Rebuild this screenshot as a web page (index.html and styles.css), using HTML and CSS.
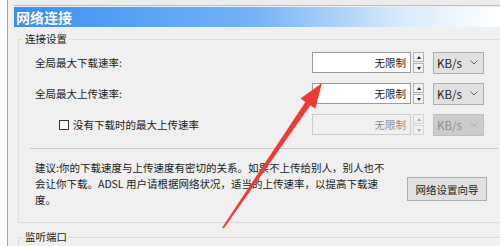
FILE: index.html
```html
<!DOCTYPE html>
<html>
<head>
    <meta charset="UTF-8">
    <meta name="viewport" content="width=device-width, initial-scale=1.0">
    <title>网络连接</title>
    <link rel="stylesheet" href="styles.css">
</head>
<body>
    <div class="shell">
        <div class="side"></div>
        <div class="main">
            <div class="topline"></div>
            <div class="titlebar">网络连接</div>
            <div class="panel">
                <fieldset class="group">
                    <legend>连接设置</legend>

                    <div class="row">
                        <span class="row-label">全局最大下载速率:</span>
                        <div class="field">无限制</div>
                        <div class="spin"><span class="up"></span><span class="down"></span></div>
                        <div class="unit">KB/s
                            <svg width="8" height="5" viewBox="0 0 8 5"><polyline points="0.5,0.5 4,4 7.5,0.5" fill="none" stroke="#666" stroke-width="1"/></svg>
                        </div>
                    </div>

                    <div class="row">
                        <span class="row-label">全局最大上传速率:</span>
                        <div class="field">无限制</div>
                        <div class="spin"><span class="up"></span><span class="down"></span></div>
                        <div class="unit">KB/s
                            <svg width="8" height="5" viewBox="0 0 8 5"><polyline points="0.5,0.5 4,4 7.5,0.5" fill="none" stroke="#666" stroke-width="1"/></svg>
                        </div>
                    </div>

                    <div class="row disabled">
                        <span class="row-label check"><span class="box"></span>没有下载时的最大上传速率</span>
                        <div class="field">无限制</div>
                        <div class="spin"><span class="up"></span><span class="down"></span></div>
                        <div class="unit">KB/s
                            <svg width="8" height="5" viewBox="0 0 8 5"><polyline points="0.5,0.5 4,4 7.5,0.5" fill="none" stroke="#aaa" stroke-width="1"/></svg>
                        </div>
                    </div>

                    <div class="sep"></div>

                    <div class="advice">
                        <div class="advice-text">
                            <span>建议:你的下载速度与上传速度有密切的关系。如果不上传给别人，别人也不</span>
                            <span>会让你下载。ADSL 用户请根据网络状况，适当的上传速率，以提高下载速</span>
                            <span>度。</span>
                        </div>
                        <button type="button">网络设置向导</button>
                    </div>
                </fieldset>

                <fieldset class="group">
                    <legend>监听端口</legend>
                </fieldset>
            </div>
        </div>
    </div>

    <svg class="arrow" width="500" height="246" viewBox="0 0 500 246">
        <polygon points="322,83 315.3,108.7 310.4,105.3 223.8,228.6 222.2,227.4 305.4,101.9 300.5,98.6" fill="#ee3b36"/>
    </svg>
</body>
</html>
```

FILE: styles.css
```css
body {
    margin: 0;
    width: 500px;
    height: 246px;
    overflow: hidden;
    position: relative;
    background-color: #f0f0f0;
    font-family: "Noto Sans CJK SC", "Noto Sans", sans-serif;
    font-size: 10.5px;
    color: #1a1a1a;
}
.shell {
    display: flex;
    height: 246px;
    overflow: hidden;
}
.side {
    flex-shrink: 0;
    width: 7px;
    background: #fff;
    border-right: 1px solid #a5a5a5;
}
.main {
    flex: 1;
    margin-left: 6px;
    overflow: hidden;
}
.topline {
    height: 5px;
    background: #ececec;
    border-bottom: 1px solid #bcbcbc;
    margin-bottom: 1px;
}
.titlebar {
    height: 20px;
    line-height: 20px;
    padding-left: 2px;
    color: #fff;
    font-size: 14px;
    font-weight: bold;
    text-shadow: 0 0 1px rgba(0,0,0,0.25);
    background: linear-gradient(to right, #3b8ef1 0%, #74b4f6 50%, #d8ebfd 80%, #fff 100%);
}
.panel {
    padding-left: 4px;
    box-shadow: -1px 0 #d8d8d8;
}
.group {
    margin: 5px 0 0 0;
    border: 1px solid #dcdcdc;
    border-right: none;
    padding: 6px 16px 14px 16px;
    min-width: 0;
}
.group + .group {
    margin-top: 7px;
    height: 20px;
}
.group legend {
    margin-left: -12px;
    padding: 0 2px;
    line-height: 14px;
}
.row {
    display: flex;
    align-items: center;
    height: 21px;
}
.row + .row {
    margin-top: 10px;
}
.row-label {
    flex: 1;
}
.check {
    display: flex;
    align-items: center;
    padding-left: 24px;
}
.box {
    width: 10px;
    height: 10px;
    box-sizing: border-box;
    border: 1px solid #333;
    background: #fff;
    margin-right: 4px;
}
.field {
    width: 99px;
    height: 21px;
    box-sizing: border-box;
    border: 1px solid #9a9a9a;
    background: #fff;
    text-align: right;
    padding-right: 4px;
    line-height: 19px;
}
.spin {
    width: 11px;
    height: 21px;
    margin-left: 2px;
    display: flex;
    flex-direction: column;
    gap: 1px;
}
.spin span {
    flex: 1;
    border: 1px solid #b4b4b4;
    background: #f4f4f4;
    display: flex;
    align-items: center;
    justify-content: center;
}
.spin .up::after {
    content: "";
    border-style: solid;
    border-width: 0 2.5px 3px 2.5px;
    border-color: transparent transparent #222 transparent;
}
.spin .down::after {
    content: "";
    border-style: solid;
    border-width: 3px 2.5px 0 2.5px;
    border-color: #222 transparent transparent transparent;
}
.unit {
    width: 51px;
    height: 22px;
    margin-left: 9px;
    box-sizing: border-box;
    border: 1px solid #adadad;
    background: #e1e1e1;
    display: flex;
    align-items: center;
    justify-content: space-between;
    padding: 0 5px 0 3px;
    font-size: 11.5px;
}
.disabled .field {
    background: #f0f0f0;
    border-color: #cccccc;
    color: #8d8d8d;
}
.disabled .spin span {
    border-color: #d4d4d4;
    background: #f0f0f0;
}
.disabled .spin .up::after {
    border-bottom-color: #a8a8a8;
}
.disabled .spin .down::after {
    border-top-color: #a8a8a8;
}
.disabled .unit {
    background: #cccccc;
    border-color: #bfbfbf;
    color: #8d8d8d;
}
.sep {
    margin: 13px -14px 0 -5px;
    border-top: 1px solid #c8c8c8;
}
.advice {
    display: flex;
    align-items: flex-start;
    margin-top: 11px;
}
.advice-text {
    display: flex;
    flex-direction: column;
    white-space: nowrap;
    line-height: 16px;
}
.advice button {
    margin: 17px -3px 0 auto;
    width: 80px;
    height: 24px;
    border: 1px solid #adadad;
    background: #e1e1e1;
    font-family: inherit;
    font-size: 10.5px;
    color: #1a1a1a;
    padding: 0;
}
.arrow {
    position: absolute;
    top: 0;
    left: 0;
    pointer-events: none;
}
```
